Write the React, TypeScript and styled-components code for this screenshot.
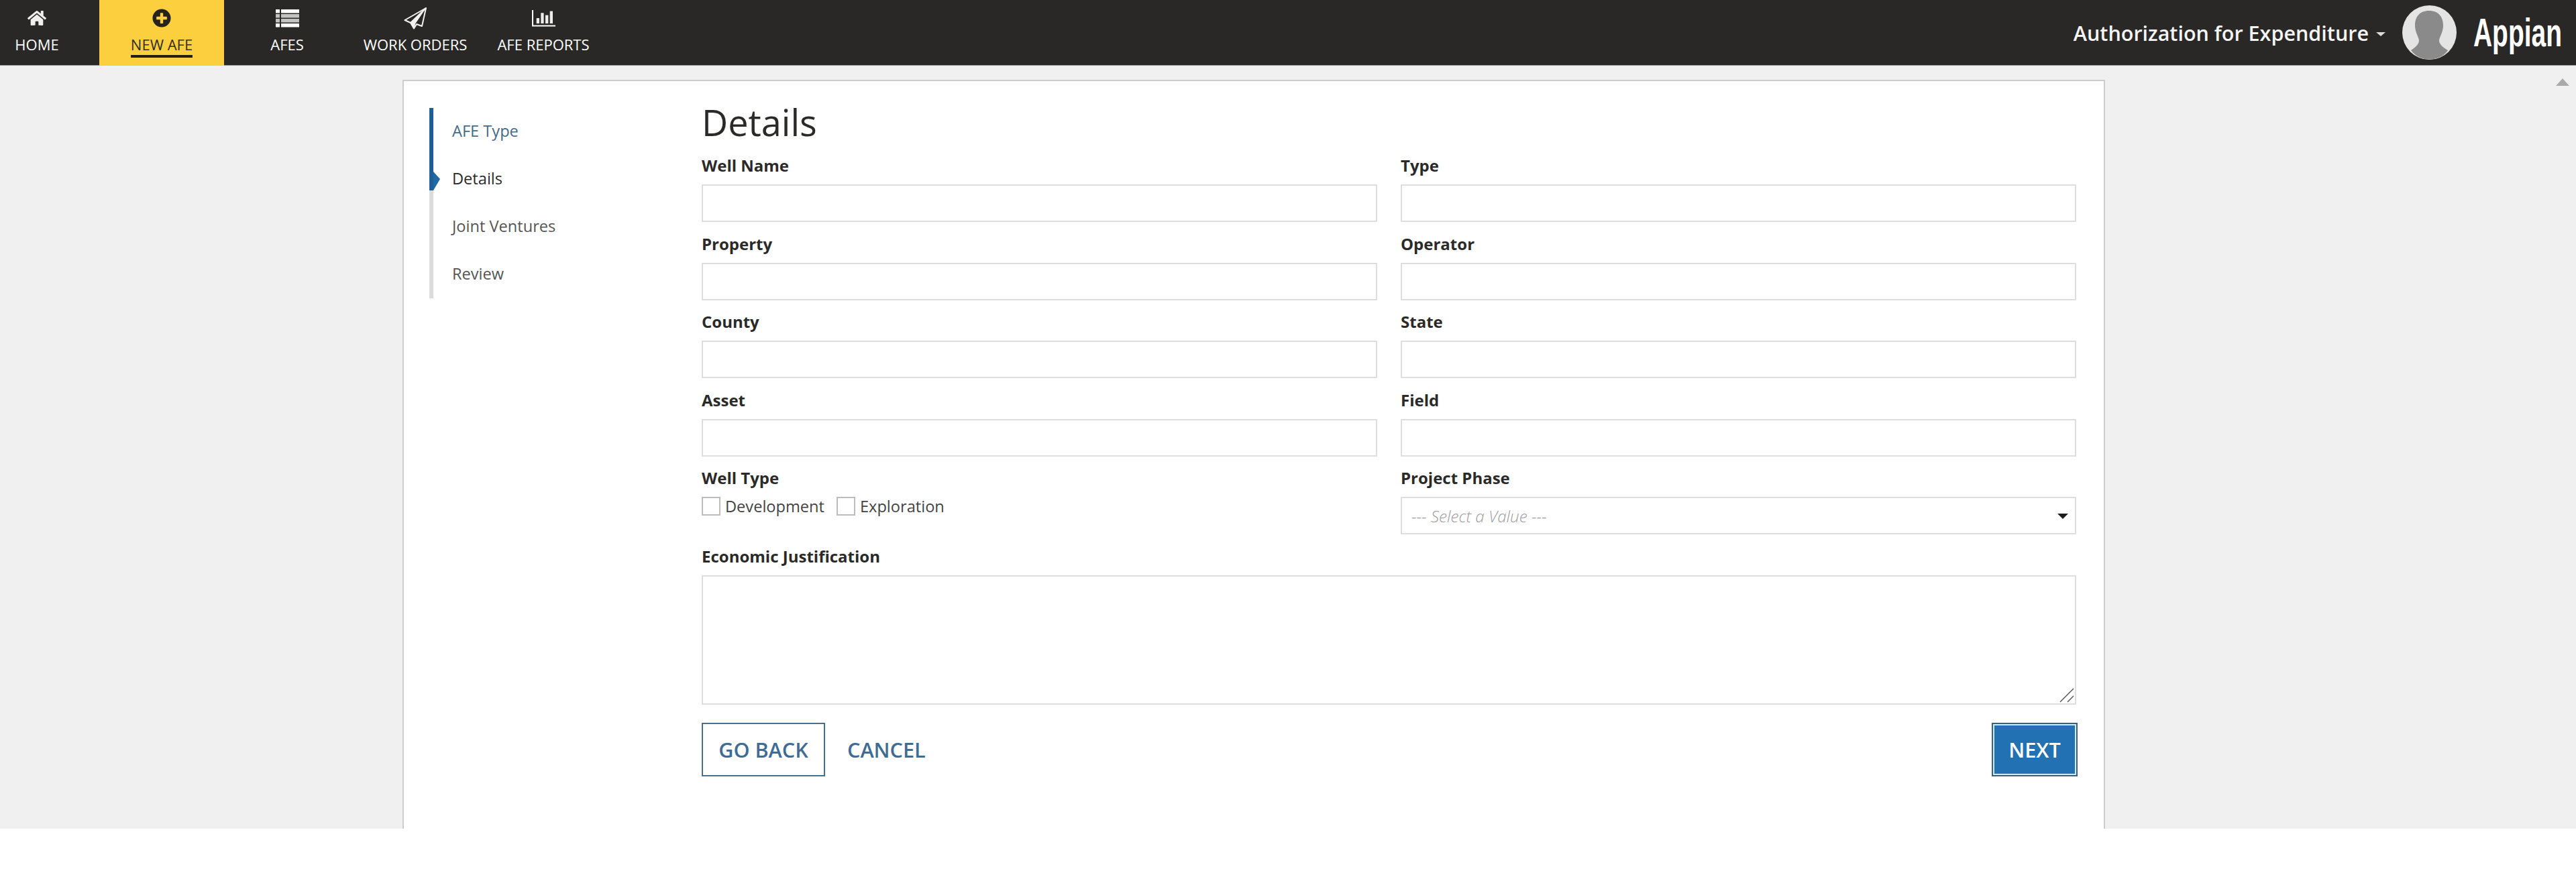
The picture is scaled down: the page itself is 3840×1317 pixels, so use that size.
import React from "react";
import styled, { createGlobalStyle } from "styled-components";
import { FaHome, FaPlusCircle } from "react-icons/fa";

const GlobalStyle = createGlobalStyle`
  html, body {
    margin: 0;
    padding: 0;
    background: #ffffff;
    font-family: "Open Sans", "Liberation Sans", sans-serif;
  }
`;

const Header = styled.header`
  display: flex;
  align-items: flex-start;
  height: 97px;
  background: #292826;
  border-bottom: 1px solid #9a9a9a;
`;

const Nav = styled.nav`
  display: flex;
  height: 98px;
`;

const NavItem = styled.a<{ $width: number; $active?: boolean; $gap?: number }>`
  display: flex;
  flex-direction: column;
  align-items: center;
  box-sizing: border-box;
  width: ${(p) => p.$width}px;
  margin-right: ${(p) => p.$gap || 0}px;
  height: 98px;
  padding-top: 10px;
  background: ${(p) => (p.$active ? "#fccf3e" : "transparent")};
  color: ${(p) => (p.$active ? "#33301c" : "#ffffff")};
`;

const IconSlot = styled.span`
  display: flex;
  align-items: center;
  justify-content: center;
  height: 34px;
  margin-bottom: 10px;
`;

const NavLabel = styled.span<{ $active?: boolean }>`
  font-size: 22px;
  line-height: 24px;
  white-space: nowrap;
  padding-bottom: 4px;
  border-bottom: 4px solid ${(p) => (p.$active ? "#231f12" : "transparent")};
`;

const Account = styled.div`
  display: flex;
  align-items: center;
  height: 97px;
  margin-left: auto;
  padding-right: 23px;
`;

const AppName = styled.span`
  color: #f4f4f4;
  font-size: 30.5px;
  font-weight: 600;
  white-space: nowrap;
`;

const Caret = styled.span`
  width: 0;
  height: 0;
  margin: 4px 25px 0 11px;
  border-left: 7px solid transparent;
  border-right: 7px solid transparent;
  border-top: 6px solid #dddddd;
`;

const Logo = styled.span`
  display: block;
  width: 130px;
  margin-left: 25px;
  color: #ffffff;
  font-family: "Liberation Sans", sans-serif;
  font-size: 59px;
  font-weight: 700;
  line-height: 60px;
  transform: scaleX(0.66);
  transform-origin: left center;
  white-space: nowrap;
`;

const Main = styled.main`
  position: relative;
  display: flex;
  flex-direction: column;
  box-sizing: border-box;
  height: 1138px;
  padding: 21px 0 0 600px;
  background: #f0f0f0;
  overflow: hidden;
`;

const ScrollUp = styled.span`
  position: absolute;
  top: 19px;
  right: 10px;
  width: 0;
  height: 0;
  border-left: 10px solid transparent;
  border-right: 10px solid transparent;
  border-bottom: 11px solid #a9a9a9;
`;

const Card = styled.section`
  display: grid;
  grid-template-columns: 406px 2049px;
  flex: 1;
  box-sizing: border-box;
  width: 2538px;
  padding: 40px 0 0 38px;
  background: #ffffff;
  border: 2px solid #cccccc;
  border-bottom: 0;
`;

const Steps = styled.ol`
  list-style: none;
  margin: 0;
  padding: 0;
`;

const Step = styled.li<{ $state: "done" | "current" | "todo" }>`
  position: relative;
  box-sizing: border-box;
  height: 71px;
  padding-left: 28px;
  border-left: 6px solid ${(p) => (p.$state === "done" ? "#1f5f95" : "#dcdcdc")};
  font-size: 23.6px;
  line-height: 68px;
  color: ${(p) =>
    p.$state === "done" ? "#446b88" : p.$state === "current" ? "#2a2a2a" : "#555555"};

  ${(p) =>
    p.$state === "current" &&
    `
    &::before {
      content: "";
      position: absolute;
      left: -6px;
      top: 0;
      width: 6px;
      height: 52px;
      background: #1f5f95;
    }
    &::after {
      content: "";
      position: absolute;
      left: 0;
      top: 24px;
      border-left: 10px solid #1f6aa5;
      border-top: 11px solid transparent;
      border-bottom: 17px solid transparent;
    }
  `}
`;

const Form = styled.form`
  display: flex;
  flex-direction: column;
`;

const Title = styled.h1`
  margin: 0 0 28px;
  font-size: 54px;
  font-weight: 400;
  line-height: 43px;
  color: #2b2a28;
`;

const FieldGrid = styled.div`
  display: grid;
  grid-template-columns: 1fr 1fr;
  column-gap: 35px;
  row-gap: 17.6px;
`;

const Field = styled.div<{ $wide?: boolean }>`
  grid-column: ${(p) => (p.$wide ? "1 / -1" : "auto")};
`;

const Label = styled.label`
  display: block;
  margin-bottom: 14px;
  font-size: 24px;
  font-weight: 700;
  line-height: 29px;
  color: #2b2a28;
`;

const TextInput = styled.input`
  display: block;
  box-sizing: border-box;
  width: 100%;
  height: 56px;
  background: #ffffff;
  border: 2px solid #dedede;
  border-radius: 0;
  outline: none;
`;

const Checks = styled.div`
  display: flex;
  align-items: center;
  height: 28px;
`;

const CheckLabel = styled.label`
  display: flex;
  align-items: center;
  margin-right: 18px;
  font-size: 23.6px;
  color: #444444;
`;

const Check = styled.input`
  appearance: none;
  box-sizing: border-box;
  width: 28px;
  height: 28px;
  margin: 0 7px 0 0;
  background: #ffffff;
  border: 2px solid #bdbdbd;
  border-radius: 0;
`;

const SelectWrap = styled.div`
  position: relative;
  height: 56px;

  &::after {
    content: "";
    position: absolute;
    right: 12px;
    top: 25px;
    border-left: 8px solid transparent;
    border-right: 8px solid transparent;
    border-top: 8px solid #1c1c1c;
  }
`;

const Select = styled.select`
  appearance: none;
  display: block;
  box-sizing: border-box;
  width: 100%;
  height: 56px;
  padding: 0 0 0 14px;
  background: #ffffff;
  border: 2px solid #dedede;
  border-radius: 0;
  font-family: "Open Sans", sans-serif;
  font-size: 24.2px;
  font-style: italic;
  font-weight: 300;
  color: #9c9c9c;
`;

const TextAreaWrap = styled.div`
  position: relative;
`;

const TextArea = styled.textarea`
  display: block;
  box-sizing: border-box;
  width: 100%;
  height: 193px;
  background: #ffffff;
  border: 2px solid #dedede;
  border-radius: 0;
  outline: none;
  resize: none;
`;

const ResizeGrip = styled.svg`
  position: absolute;
  right: 3px;
  bottom: 3px;
`;

const Actions = styled.div`
  display: flex;
  align-items: center;
  margin: 27px -2px 0 0;
`;

const Button = styled.button`
  box-sizing: border-box;
  height: 80px;
  font-family: "Open Sans", sans-serif;
  font-size: 30.6px;
  font-weight: 600;
  border-radius: 0;
`;

const OutlineButton = styled(Button)`
  width: 184px;
  padding: 0;
  background: #ffffff;
  border: 2px solid #47708f;
  color: #3f6c96;
`;

const LinkButton = styled(Button)`
  margin-left: 33px;
  padding: 0;
  background: transparent;
  border: 0;
  color: #3f6c96;
`;

const NextButton = styled(Button)`
  width: 128px;
  margin-left: auto;
  padding: 0;
  background: #2271b3;
  border: 2px solid #3d5f7a;
  box-shadow: inset 0 0 0 2px #c9ecfa;
  color: #ffffff;
`;

const ListIcon = () => (
  <svg width="35" height="27" viewBox="0 0 35 27" fill="#ffffff">
    {[0, 7, 14, 21].map((y, i) => (
      <g key={y} opacity={i === 1 || i === 2 ? 0.72 : 1}>
        <rect x="0" y={y} width="6" height="5.5" />
        <rect x="8" y={y} width="27" height="5.5" />
      </g>
    ))}
  </svg>
);

const PlaneIcon = () => (
  <svg width="34" height="33" viewBox="0 0 34 33" fill="none" stroke="#f2f2f2" strokeWidth="2">
    <path d="M33 1 L1.5 19 L10 23 L15 31.5 L19 25 L27 28 Z" strokeLinejoin="round" />
    <path d="M33 1 L10 23" />
    <path d="M10 23 L15 31.5 L17.5 24 L33 1 Z" fill="#f2f2f2" stroke="none" />
  </svg>
);

const ChartIcon = () => (
  <svg width="35" height="25" viewBox="0 0 35 25">
    <path d="M1 0 V23.5 H35" fill="none" stroke="#ffffff" strokeWidth="2" />
    <g fill="#ededed">
      <rect x="6.7" y="12" width="4.3" height="8" />
      <rect x="13.3" y="4.3" width="4.3" height="15.7" />
      <rect x="20" y="7.6" width="4.3" height="12.4" />
      <rect x="26.7" y="1.6" width="4.3" height="18.4" />
    </g>
  </svg>
);

const Avatar = () => (
  <svg width="81" height="81" viewBox="0 0 81 81">
    <defs>
      <clipPath id="avatar-clip">
        <circle cx="40.5" cy="40.5" r="40" />
      </clipPath>
    </defs>
    <circle cx="40.5" cy="40.5" r="40.5" fill="#e4e4e4" />
    <path
      clipPath="url(#avatar-clip)"
      d="M40 8 C26 8 19 17 19 30 C19 40 24 46 25 52 C25 58 20 62 13 67 C20 76 30 81 40 81 C52 81 62 76 68 67 C60 62 55 58 55 52 C56 46 61 40 61 30 C61 17 54 8 40 8 Z"
      fill="#8a8a8a"
    />
  </svg>
);

const steps = [
  { name: "AFE Type", state: "done" as const },
  { name: "Details", state: "current" as const },
  { name: "Joint Ventures", state: "todo" as const },
  { name: "Review", state: "todo" as const },
];

const textRows = ["Well Name", "Type", "Property", "Operator", "County", "State", "Asset", "Field"];

export default function App() {
  return (
    <>
      <GlobalStyle />
      <Header>
        <Nav>
          <NavItem $width={110} $gap={38}>
            <IconSlot>
              <FaHome size={28} color="#efefef" />
            </IconSlot>
            <NavLabel>HOME</NavLabel>
          </NavItem>
          <NavItem $width={186} $active>
            <IconSlot>
              <FaPlusCircle size={28} color="#26241a" />
            </IconSlot>
            <NavLabel $active>NEW AFE</NavLabel>
          </NavItem>
          <NavItem $width={188}>
            <IconSlot>
              <ListIcon />
            </IconSlot>
            <NavLabel>AFES</NavLabel>
          </NavItem>
          <NavItem $width={194}>
            <IconSlot>
              <PlaneIcon />
            </IconSlot>
            <NavLabel>WORK ORDERS</NavLabel>
          </NavItem>
          <NavItem $width={188}>
            <IconSlot>
              <ChartIcon />
            </IconSlot>
            <NavLabel>AFE REPORTS</NavLabel>
          </NavItem>
        </Nav>
        <Account>
          <AppName>Authorization for Expenditure</AppName>
          <Caret />
          <Avatar />
          <Logo>Appian</Logo>
        </Account>
      </Header>
      <Main>
        <ScrollUp />
        <Card>
          <Steps>
            {steps.map((s) => (
              <Step key={s.name} $state={s.state}>
                {s.name}
              </Step>
            ))}
          </Steps>
          <Form>
            <Title>Details</Title>
            <FieldGrid>
              {textRows.map((name) => (
                <Field key={name}>
                  <Label>{name}</Label>
                  <TextInput type="text" />
                </Field>
              ))}
              <Field>
                <Label>Well Type</Label>
                <Checks>
                  <CheckLabel>
                    <Check type="checkbox" />
                    Development
                  </CheckLabel>
                  <CheckLabel>
                    <Check type="checkbox" />
                    Exploration
                  </CheckLabel>
                </Checks>
              </Field>
              <Field>
                <Label>Project Phase</Label>
                <SelectWrap>
                  <Select>
                    <option>--- Select a Value ---</option>
                  </Select>
                </SelectWrap>
              </Field>
              <Field $wide>
                <Label>Economic Justification</Label>
                <TextAreaWrap>
                  <TextArea />
                  <ResizeGrip width="22" height="22" viewBox="0 0 22 22" stroke="#555555" strokeWidth="1.5">
                    <path d="M1 21 L21 1" />
                    <path d="M12 21 L21 12" />
                  </ResizeGrip>
                </TextAreaWrap>
              </Field>
            </FieldGrid>
            <Actions>
              <OutlineButton type="button">GO BACK</OutlineButton>
              <LinkButton type="button">CANCEL</LinkButton>
              <NextButton type="button">NEXT</NextButton>
            </Actions>
          </Form>
        </Card>
      </Main>
    </>
  );
}
